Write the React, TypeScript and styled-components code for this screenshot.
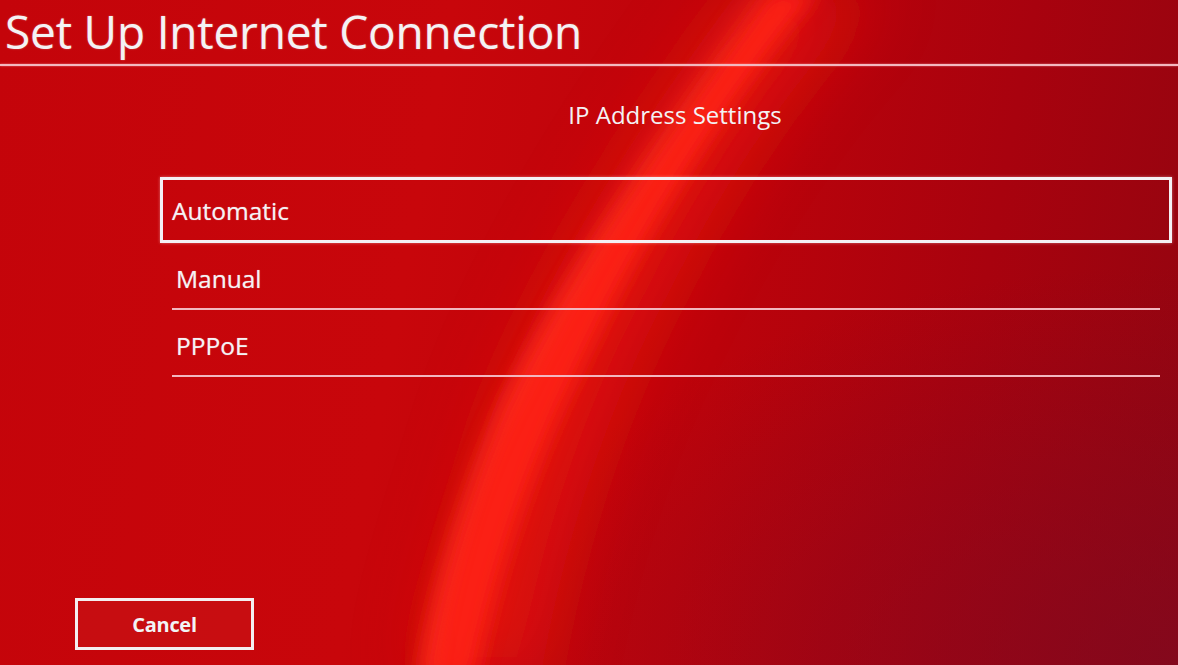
import React from 'react'
import styled, { createGlobalStyle } from 'styled-components'

const GlobalStyle = createGlobalStyle`
  html, body {
    margin: 0;
    padding: 0;
    width: 100%;
    height: 100%;
    overflow: hidden;
    background: #b0000a;
  }
  #root {
    height: 100%;
  }
`

const Screen = styled.div`
  position: relative;
  width: 1178px;
  height: 665px;
  overflow: hidden;
  font-family: 'Open Sans', 'Noto Sans', sans-serif;
  color: #f4f2f4;
  background: linear-gradient(
    100deg,
    #c4040a 0%,
    #c8060b 35%,
    #bb030b 60%,
    #a8020e 80%,
    #920510 100%
  );
  display: flex;
  flex-direction: column;
`

// the glowing swoosh that sits behind the menu
const Swoosh = styled.svg`
  position: absolute;
  inset: 0;
  pointer-events: none;
`

const Content = styled.div`
  position: relative;
  z-index: 1;
  flex: 1;
  display: flex;
  flex-direction: column;
`

const Title = styled.h1`
  margin: 0;
  padding: 0 0 0 5px;
  height: 64px;
  font-size: 46px;
  font-weight: 400;
  line-height: 62px;
  letter-spacing: -0.2px;
  text-shadow: 0 0 2px rgba(255, 255, 255, 0.35);
`

const Rule = styled.div`
  height: 2px;
  background: #f3b9c0;
  box-shadow: 0 0 2px rgba(255, 210, 220, 0.6);
`

const Body = styled.div`
  display: flex;
  flex-direction: column;
  padding-left: 160px;
  width: 1012px;
`

const Heading = styled.div`
  text-align: center;
  margin-top: 32px;
  margin-left: 18px;
  height: 40px;
  font-size: 24px;
  line-height: 34px;
`

const OptionList = styled.div`
  display: flex;
  flex-direction: column;
  margin-top: 39px;
`

const Option = styled.div<{ $selected?: boolean }>`
  display: flex;
  align-items: center;
  box-sizing: border-box;
  font-size: 24.5px;
  text-shadow: 0 0 1px rgba(255, 255, 255, 0.6);
  ${(p) =>
    p.$selected
      ? `
    height: 66px;
    padding-left: 9px;
    border: 3px solid #f4f0f4;
    box-shadow: 0 0 3px rgba(255, 255, 255, 0.4);
  `
      : `
    height: 67px;
    margin-left: 12px;
    margin-right: 12px;
    padding-left: 4px;
    padding-top: 6px;
    border-bottom: 2px solid #f2b7bf;
  `}
`

const Footer = styled.div`
  margin-top: auto;
  padding: 0 0 15px 75px;
`

const CancelButton = styled.button`
  width: 179px;
  height: 52px;
  box-sizing: border-box;
  border: 3px solid #f4eef0;
  background: rgba(200, 20, 24, 0.55);
  color: #f2f4f6;
  font-family: 'Open Sans', 'Noto Sans', sans-serif;
  font-size: 20px;
  font-weight: 700;
  letter-spacing: -0.3px;
  cursor: pointer;
`

const options = ['Automatic', 'Manual', 'PPPoE']

const App: React.FC = () => {
  return (
    <>
      <GlobalStyle />
      <Screen>
        <Swoosh viewBox="0 0 1178 665" width="1178" height="665">
          <defs>
            <filter id="soft" x="-20%" y="-20%" width="140%" height="140%">
              <feGaussianBlur stdDeviation="10" />
            </filter>
            <filter id="softer" x="-20%" y="-20%" width="140%" height="140%">
              <feGaussianBlur stdDeviation="35" />
            </filter>
            <radialGradient id="corner" cx="1" cy="1" r="0.6">
              <stop offset="0" stopColor="#7a0a24" stopOpacity="0.6" />
              <stop offset="1" stopColor="#7a0a24" stopOpacity="0" />
            </radialGradient>
          </defs>
          <rect x="0" y="0" width="1178" height="665" fill="url(#corner)" />
          {/* wide haze around the band */}
          <path
            d="M740 -10 C640 120 540 280 490 420 C460 520 430 600 420 680 L540 680 C560 560 600 420 670 290 C730 170 800 70 880 -10 Z"
            fill="#e8120e"
            opacity="0.75"
            filter="url(#softer)"
          />
          {/* bright core */}
          <path
            d="M770 -10 C670 130 560 280 500 410 C460 510 430 600 420 680 L475 680 C495 580 530 470 580 370 C640 240 720 110 820 -10 Z"
            fill="#ff2414"
            opacity="0.9"
            filter="url(#soft)"
          />
          {/* lit leading edge */}
          <path
            d="M425 680 C440 570 470 470 520 380 C580 260 660 130 760 -10"
            stroke="#ff5236"
            strokeWidth="8"
            fill="none"
            opacity="0.4"
            filter="url(#soft)"
          />
        </Swoosh>
        <Content>
          <Title>Set Up Internet Connection</Title>
          <Rule />
          <Body>
            <Heading>IP Address Settings</Heading>
            <OptionList>
              {options.map((label, i) => (
                <Option key={label} $selected={i === 0}>
                  {label}
                </Option>
              ))}
            </OptionList>
          </Body>
          <Footer>
            <CancelButton>Cancel</CancelButton>
          </Footer>
        </Content>
      </Screen>
    </>
  )
}

export default App
